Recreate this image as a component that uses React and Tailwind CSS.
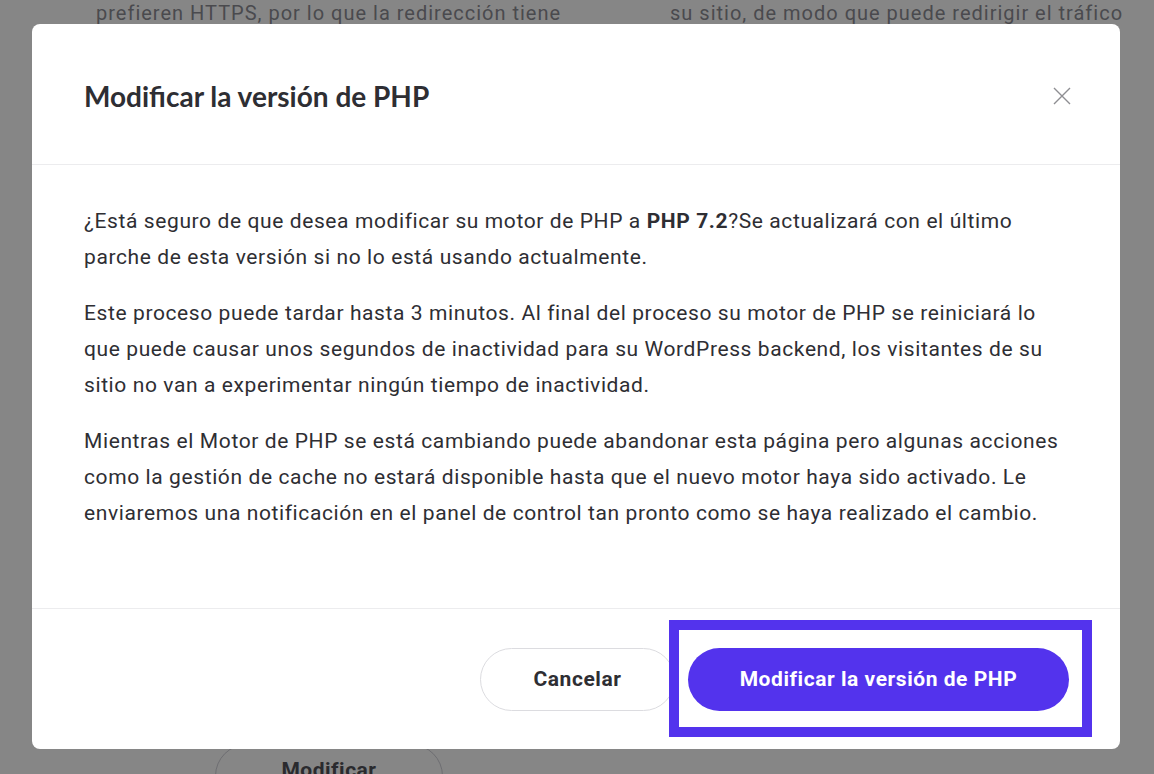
import React from 'react';

const body = '"Roboto", "Liberation Sans", sans-serif';
const heading = '"Lato", "Noto Sans", sans-serif';

const BackgroundPage = () => (
  <div className="h-screen overflow-hidden bg-[#868686] text-[#4a4a4e]" style={{ fontFamily: body }}>
    <div className="grid grid-cols-2 -mt-[5px] text-[20px] leading-[36px] tracking-[1px]">
      <p className="pl-[96px] whitespace-nowrap">prefieren HTTPS, por lo que la redirección tiene</p>
      <p className="pl-[93px] whitespace-nowrap">su sitio, de modo que puede redirigir el tráfico</p>
    </div>
    <div className="mt-[713px] pl-[215px]">
      <button className="h-[64px] w-[228px] rounded-full border border-[#6e6e72] text-[21px] font-bold text-[#2a2a2e] pb-[10px] tracking-[0.5px]">
        Modificar
      </button>
    </div>
  </div>
);

const CloseIcon = () => (
  <svg width="18" height="18" viewBox="0 0 18 18" fill="none" stroke="#8e8e92" strokeWidth="1.4">
    <path d="M1 1l16 16M17 1L1 17" />
  </svg>
);

export default function App() {
  return (
    <div className="relative h-screen w-full overflow-hidden">
      <BackgroundPage />
      <div className="absolute left-[32px] top-[24px] flex h-[725px] w-[1088px] flex-col rounded-lg bg-white">
        <div className="flex h-[141px] items-center justify-between border-b border-[#ececee] pl-[52px] pr-[49px] pt-[3px]">
          <h2 className="text-[28px] font-bold text-[#2e2e33]" style={{ fontFamily: heading }}>
            Modificar la versión de PHP
          </h2>
          <button className="flex h-[18px] w-[18px] items-center justify-center">
            <CloseIcon />
          </button>
        </div>

        <div
          className="flex-1 whitespace-nowrap pl-[52px] pt-[38px] text-[21px] leading-[36px] tracking-[0.6px] text-[#2e2e33]"
          style={{ fontFamily: body }}
        >
          <p>
            ¿Está seguro de que desea modificar su motor de PHP a <strong className="font-bold">PHP 7.2</strong>?Se
            actualizará con el último
            <br />
            parche de esta versión si no lo está usando actualmente.
          </p>
          <p className="mt-[20px]">
            Este proceso puede tardar hasta 3 minutos. Al final del proceso su motor de PHP se reiniciará lo
            <br />
            que puede causar unos segundos de inactividad para su WordPress backend, los visitantes de su
            <br />
            sitio no van a experimentar ningún tiempo de inactividad.
          </p>
          <p className="mt-[20px]">
            Mientras el Motor de PHP se está cambiando puede abandonar esta página pero algunas acciones
            <br />
            como la gestión de cache no estará disponible hasta que el nuevo motor haya sido activado. Le
            <br />
            enviaremos una notificación en el panel de control tan pronto como se haya realizado el cambio.
          </p>
        </div>

        <div
          className="flex h-[141px] items-center justify-end gap-[13px] border-t border-[#ececee] pr-[51px]"
          style={{ fontFamily: body }}
        >
          <button className="h-[63px] w-[195px] rounded-full border border-[#dcdce0] bg-white pt-[1px] text-[21px] font-bold tracking-[0.55px] text-[#2e2e33]">
            Cancelar
          </button>
          <div className="relative">
            <button className="h-[63px] w-[381px] rounded-full bg-[#5333ed] pt-[1px] text-[21px] font-bold tracking-[0.55px] text-white">
              Modificar la versión de PHP
            </button>
            <span className="pointer-events-none absolute -bottom-[26px] -left-[19px] -right-[23px] -top-[28px] border-[10px] border-[#5333ed]" />
          </div>
        </div>
      </div>
    </div>
  );
}
